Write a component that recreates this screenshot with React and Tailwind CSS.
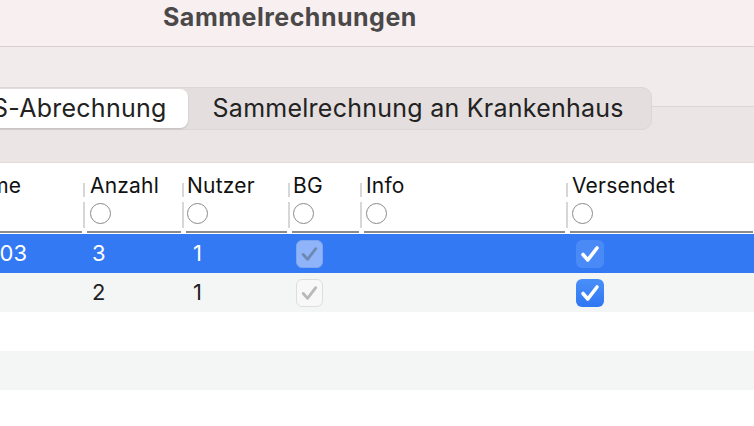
const cols = [
  { key: "name", w: "w-[83px]", sep: false, label: "Name", hpl: "" },
  { key: "anzahl", w: "w-[99px]", sep: true, label: "Anzahl", hpl: "pl-[5px]" },
  { key: "nutzer", w: "w-[106px]", sep: true, label: "Nutzer", hpl: "pl-[3px]" },
  { key: "bg", w: "w-[72px]", sep: true, label: "BG", hpl: "pl-[3px]" },
  { key: "info", w: "w-[206px]", sep: true, label: "Info", hpl: "pl-[4px]" },
  { key: "vers", w: "w-[188px]", sep: true, label: "Versendet", hpl: "pl-[4px]" },
];

const rows = [
  { name: "2024-03", anzahl: "3", nutzer: "1", selected: true, bgc: "bg-[#3479f4]" },
  { name: "", anzahl: "2", nutzer: "1", selected: false, bgc: "bg-[#f4f5f5]" },
  { bgc: "bg-white", empty: true },
  { bgc: "bg-[#f4f5f5]", empty: true },
];

function Check({ color, width = 3 }) {
  return (
    <svg viewBox="0 0 28 28" className="w-full h-full">
      <path d="M7 14.5 L11.8 20 L21 8" fill="none" stroke={color} strokeWidth={width} strokeLinecap="round" strokeLinejoin="round" />
    </svg>
  );
}

function BgBox({ selected }) {
  if (selected) {
    return (
      <div className="w-[27px] h-[28px] rounded-[6px] bg-[#8fb4f9] border border-[#7ea6f0]">
        <Check color="#6f89b4" width={3.2} />
      </div>
    );
  }
  return (
    <div className="w-[27px] h-[28px] rounded-[6px] bg-[#f8f8f8] border border-[#dedede]">
      <Check color="#b9b9b9" width={3.2} />
    </div>
  );
}

function VersBox({ selected }) {
  return (
    <div
      className={
        selected
          ? "w-[28px] h-[28px] rounded-[6px] bg-[#4a8af7]"
          : "w-[28px] h-[28px] rounded-[6px] bg-gradient-to-b from-[#4a8ff8] to-[#2f77f3]"
      }
    >
      <Check color="#ffffff" width={3.6} />
    </div>
  );
}

export default function App() {
  return (
    <div className="w-[754px] h-[426px] overflow-hidden bg-white font-['Inter',sans-serif] text-[#1f1f1f]">
      {/* Title bar */}
      <div className="h-[47px] bg-[#f7eff0] border-b border-[#d6d0d1] flex items-start pt-[5px] pl-[163px]">
        <span className="text-[25px] font-bold text-[#4b4849] leading-none tracking-[0.5px]">Sammelrechnungen</span>
      </div>

      {/* Tab area */}
      <div className="h-[116px] bg-[#f1ebeb] flex flex-col">
        <div className="h-[59px]" />
        <div className="relative flex-1 bg-[#ebe5e5] border-t border-[#dcd6d6] border-b border-b-[#e2dcdc]">
          <div className="absolute left-[-32px] top-[-20px] h-[43px] flex rounded-[10px] bg-[#e4dede] border border-[#dcd6d6] p-[1px]">
            <div className="h-full flex items-center rounded-[8px] bg-white shadow-[0_1px_2px_rgba(0,0,0,0.15)] pl-[22px] pr-[21px]">
              <span className="text-[25px] tracking-[0.25px] text-[#222] whitespace-nowrap">S-Abrechnung</span>
            </div>
            <div className="h-full flex items-center pl-[25px] pr-[26px]">
              <span className="text-[25px] tracking-[0.25px] text-[#222] whitespace-nowrap">Sammelrechnung an Krankenhaus</span>
            </div>
          </div>
        </div>
      </div>

      {/* Table header */}
      <div className="flex h-[71px] bg-white">
        {cols.map((c) => (
          <div key={c.key} className={`${c.w} flex flex-col shrink-0`}>
            <div className="flex flex-1 min-h-0">
              {c.sep && (
                <div className="w-[2px] flex flex-col pt-[20px] pb-[3px] gap-[5px] shrink-0">
                  <div className="h-[14px] bg-[#d7d7d7]" />
                  <div className="flex-1 bg-[#d7d7d7]" />
                </div>
              )}
              {c.sep ? (
                <div className={`flex flex-col ${c.hpl}`}>
                  <span className="text-[21px] leading-[24px] mt-[11px] text-[#111] tracking-[0.2px]">{c.label}</span>
                  <div className="mt-[5px] w-[21px] h-[21px] rounded-full border border-[#8a8a8a] bg-white" />
                </div>
              ) : (
                <div className="flex-1 flex justify-end pr-[62px] overflow-hidden">
                  <span className="text-[21px] leading-[24px] mt-[11px] text-[#111] whitespace-nowrap">Name</span>
                </div>
              )}
            </div>
            <div className={c.sep ? "h-[2px] bg-[#8b8b8b] ml-[4px] mr-[1px] mb-[1px]" : "h-[2px] bg-[#8b8b8b] mr-[1px] mb-[1px]"} />
          </div>
        ))}
      </div>

      {/* Body rows */}
      {rows.map((r, i) => (
        <div key={i} className={`flex h-[39px] ${r.bgc}`}>
          {!r.empty && (
            <>
              <div className="w-[83px] shrink-0 flex items-center justify-end pr-[56px] overflow-hidden">
                <span className={`text-[22px] whitespace-nowrap ${r.selected ? "text-white" : "text-[#1f1f1f]"}`}>{r.name}</span>
              </div>
              <div className="w-[99px] shrink-0 flex items-center pl-[9px]">
                <span className={`text-[22px] ${r.selected ? "text-white" : "text-[#1f1f1f]"}`}>{r.anzahl}</span>
              </div>
              <div className="w-[106px] shrink-0 flex items-center pl-[11px]">
                <span className={`text-[22px] ${r.selected ? "text-white" : "text-[#1f1f1f]"}`}>{r.nutzer}</span>
              </div>
              <div className="w-[72px] shrink-0 flex items-center pl-[8px]">
                <BgBox selected={r.selected} />
              </div>
              <div className="w-[206px] shrink-0" />
              <div className="w-[188px] shrink-0 flex items-center pl-[10px]">
                <VersBox selected={r.selected} />
              </div>
            </>
          )}
        </div>
      ))}
    </div>
  );
}
